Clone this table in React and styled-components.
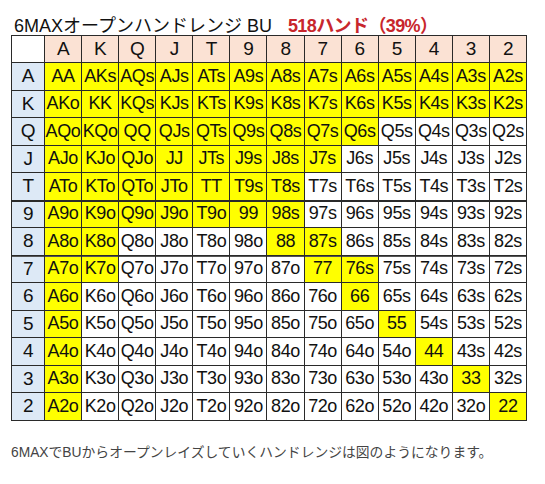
import React from "react";
import styled, { createGlobalStyle } from "styled-components";

const Global = createGlobalStyle`
  html, body { margin: 0; padding: 0; background: #ffffff; }
  body { font-family: "Liberation Sans", "Noto Sans CJK JP", sans-serif; }
`;

const Page = styled.div`
  width: 545px;
  height: 484px;
  padding-left: 11px;
  box-sizing: border-box;
  display: flex;
  flex-direction: column;
`;

const Heading = styled.div`
  margin-top: 17px;
  height: 18px;
  padding-left: 3px;
  display: flex;
  align-items: flex-end;
  gap: 16px;
  font-size: 18px;
  line-height: 18px;
  color: #111;
  white-space: nowrap;
`;

const Count = styled.span`
  color: #c8262c;
  font-weight: bold;
  letter-spacing: -0.6px;
`;

const Grid = styled.div`
  width: 516px;
  box-sizing: border-box;
  display: grid;
  grid-template-columns: 32px repeat(13, 1fr);
  grid-template-rows: 26px repeat(13, 26.5px);
  gap: 1px;
  padding: 1px;
  background: #2a2a2a;
`;

const Cell = styled.div`
  display: flex;
  align-items: center;
  justify-content: center;
  font-size: 18px;
  color: #111;
  white-space: nowrap;
  overflow: hidden;
  letter-spacing: -0.4px;
  background: ${(p) => p.$bg};
  box-shadow: ${(p) => (p.$thick ? `inset 0 1px 0 ${p.$thick}` : "none")};
`;

const HeadCell = styled(Cell)`
  font-size: 19px;
  background: ${(p) => p.$bg || "#fbe2d4"};
`;

const RankCell = styled(Cell)`
  font-size: 19px;
  background: #dde9f6;
`;

const Note = styled.p`
  margin: 20px 0 0 0;
  font-size: 13.8px;
  color: #444;
  white-space: nowrap;
`;

const ranks = ["A", "K", "Q", "J", "T", "9", "8", "7", "6", "5", "4", "3", "2"];

const openRows = [
  "YYYYYYYYYYYYY",
  "YYYYYYYYYYYYY",
  "YYYYYYYYY....",
  "YYYYYYYY.....",
  "YYYYYYY......",
  "YYYYYYY......",
  "YY....YY.....",
  "YY.....YY....",
  "Y.......Y....",
  "Y........Y...",
  "Y.........Y..",
  "Y..........Y.",
  "Y...........Y",
];

const isOpen = (i, j) => openRows[i][j] === "Y";

const label = (i, j) => {
  if (i === j) return ranks[i] + ranks[i];
  const hi = ranks[Math.min(i, j)];
  const lo = ranks[Math.max(i, j)];
  return hi + lo + (j > i ? "s" : "o");
};

const thickRow = { 5: "#2a2a2a", 7: "#555" };

export default function App() {
  return (
    <>
      <Global />
      <Page>
        <Heading>
          <span>6MAXオープンハンドレンジ BU</span>
          <Count>518ハンド（39%）</Count>
        </Heading>
        <Grid>
          <HeadCell $bg="#ffffff" />
          {ranks.map((r) => (
            <HeadCell key={r}>{r}</HeadCell>
          ))}
          {ranks.map((r, i) => (
            <React.Fragment key={r}>
              <RankCell $thick={thickRow[i]}>{r}</RankCell>
              {ranks.map((_, j) => (
                <Cell
                  key={j}
                  $thick={thickRow[i]}
                  $bg={isOpen(i, j) ? "#ffff00" : "#ffffff"}
                >
                  {label(i, j)}
                </Cell>
              ))}
            </React.Fragment>
          ))}
        </Grid>
        <Note>6MAXでBUからオープンレイズしていくハンドレンジは図のようになります。</Note>
      </Page>
    </>
  );
}
